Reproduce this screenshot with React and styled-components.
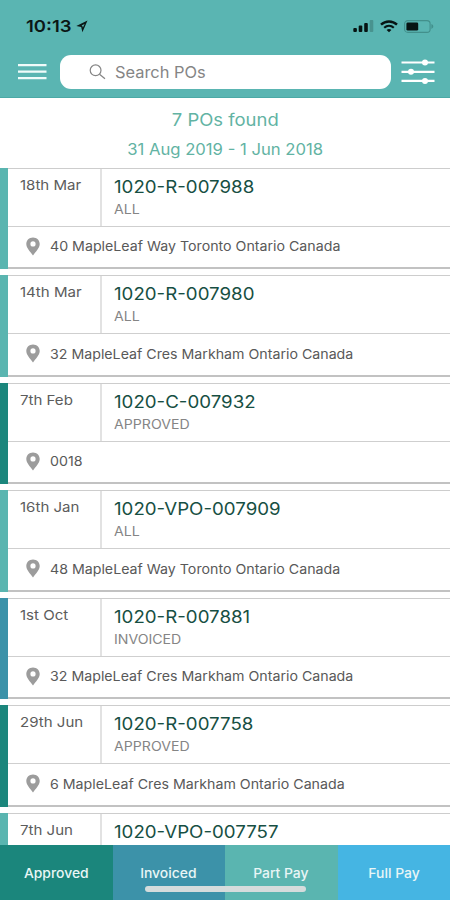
import React from "react";
import styled, { createGlobalStyle } from "styled-components";

const GlobalStyle = createGlobalStyle`
  * {
    box-sizing: border-box;
  }
  body {
    margin: 0;
    background: #fff;
    font-family: Inter, "Liberation Sans", sans-serif;
  }
`;

const statusColors = {
  APPROVED: "#1b867c",
  INVOICED: "#3c92a9",
  ALL: "#5ab5b0",
};

const orders = [
  { date: "18th Mar", number: "1020-R-007988", status: "ALL", address: "40 MapleLeaf Way Toronto Ontario Canada" },
  { date: "14th Mar", number: "1020-R-007980", status: "ALL", address: "32 MapleLeaf Cres Markham Ontario Canada" },
  { date: "7th Feb", number: "1020-C-007932", status: "APPROVED", address: "0018" },
  { date: "16th Jan", number: "1020-VPO-007909", status: "ALL", address: "48 MapleLeaf Way Toronto Ontario Canada" },
  { date: "1st Oct", number: "1020-R-007881", status: "INVOICED", address: "32 MapleLeaf Cres Markham Ontario Canada" },
  { date: "29th Jun", number: "1020-R-007758", status: "APPROVED", address: "6 MapleLeaf Cres Markham Ontario Canada" },
  { date: "7th Jun", number: "1020-VPO-007757", status: "ALL", collapsed: true },
];

const tabs = [
  { label: "Approved", color: "#1b867c" },
  { label: "Invoiced", color: "#3c92a9" },
  { label: "Part Pay", color: "#5ab5b0" },
  { label: "Full Pay", color: "#45b5e3" },
];

const Screen = styled.div`
  position: relative;
  display: flex;
  flex-direction: column;
  width: 450px;
  height: 900px;
  overflow: hidden;
  background: #fff;
`;

// wide lettering
const Wide = styled.span`
  display: inline-block;
  white-space: nowrap;
  transform: scaleX(${(p) => p.$x});
  transform-origin: ${(p) => p.$origin || "left"} center;
`;

const Header = styled.header`
  flex: none;
  height: 98px;
  background: #5ab5b2;
  border-bottom: 1px solid #4ba9a6;
`;

const StatusBar = styled.div`
  display: flex;
  align-items: center;
  justify-content: space-between;
  height: 55px;
  padding: 0 16px 3px 26px;
`;

const Clock = styled.div`
  display: flex;
  align-items: center;
  gap: 9px;
  color: #0b1716;
  font-size: 16.5px;
  font-weight: 600;
`;

const StatusIcons = styled.div`
  display: flex;
  align-items: center;
  gap: 6px;
`;

const SearchRow = styled.div`
  display: flex;
  align-items: center;
  height: 34px;
  padding: 0 15px 0 18px;
`;

const SearchBox = styled.div`
  display: flex;
  align-items: center;
  flex: 1;
  height: 34px;
  margin: 0 10px 0 13px;
  padding-left: 29px;
  gap: 9px;
  border-radius: 11px;
  background: #fff;
  color: #858585;
  font-size: 16px;
`;

const Summary = styled.div`
  flex: none;
  height: 69.5px;
  padding-top: 10px;
  text-align: center;
  color: #62b3a3;
`;

const Count = styled.div`
  font-size: 17px;
  line-height: 24px;
`;

const Range = styled.div`
  margin-top: 6px;
  font-size: 15.5px;
  line-height: 24px;
`;

const List = styled.main`
  flex: 1;
  min-height: 0;
  overflow: hidden;
`;

const Card = styled.article`
  height: 101.5px;
  margin-bottom: 6px;
  border-left: 8px solid ${(p) => statusColors[p.$status]};
`;

const CardBody = styled.div`
  display: flex;
  flex-direction: column;
  height: 100%;
  border-top: 1px solid #cdcdcd;
  border-bottom: 2px solid #c2c2c2;
`;

const CardTop = styled.div`
  display: flex;
  height: 58px;
  border-bottom: 1px solid #cfcfcf;
`;

const DateCell = styled.div`
  width: 94px;
  padding: 6px 0 0 12px;
  border-right: 2px solid #e2e2e2;
  color: #5c5c5c;
  font-size: 13.5px;
  line-height: 20px;
`;

const OrderCell = styled.div`
  padding: 6px 0 0 11.6px;
`;

const OrderNumber = styled.div`
  color: #174f43;
  font-size: 17px;
  line-height: 24px;
`;

const Status = styled.div`
  margin-top: 1px;
  color: #858585;
  font-size: 12.5px;
  line-height: 20px;
`;

const Address = styled.div`
  display: flex;
  align-items: center;
  flex: 1;
  padding: 0 0 1px 17.5px;
  gap: 10.5px;
  color: #595959;
  font-size: 13px;
`;

const TabBar = styled.nav`
  display: grid;
  flex: none;
  grid-template-columns: repeat(4, 1fr);
  height: 55px;
`;

const Tab = styled.div`
  display: flex;
  align-items: center;
  justify-content: center;
  background: ${(p) => p.$color};
  color: #e9f6f6;
  font-size: 13px;
  font-weight: 500;
`;

// sits over the tabs
const HomeIndicator = styled.div`
  position: absolute;
  left: 145px;
  bottom: 8px;
  width: 161px;
  height: 6px;
  border-radius: 3px;
  background: #d5dcdc;
`;

const LocationArrow = () => (
  <svg width="12" height="13" viewBox="0 0 12 13">
    <path d="M11.5 0.5 L0.3 5.9 L5.2 6.9 L6.4 12.3 Z" fill="#0b1716" />
    <path d="M8.6 3.9 L5.6 5.6 L6.5 6.2 L6.9 7.4 Z" fill="#5ab5b2" />
  </svg>
);

const SignalIcon = () => (
  <svg width="21" height="12" viewBox="0 0 21 12">
    <rect x="0.3" y="8" width="3.6" height="4" rx="1" fill="#071413" />
    <rect x="5.7" y="5.5" width="3.6" height="6.5" rx="1" fill="#071413" />
    <rect x="11.2" y="3" width="3.6" height="9" rx="1" fill="#071413" />
    <rect x="16.7" y="0" width="3.6" height="12" rx="1" fill="#48938f" />
  </svg>
);

const WifiIcon = () => (
  <svg width="18" height="13" viewBox="0 0 18 13" fill="none" stroke="#071413">
    <path d="M1 4.7 C5.5 0.4 12.5 0.4 17 4.7" strokeWidth="2.4" />
    <path d="M4.2 7.8 C7 5.2 11 5.2 13.8 7.8" strokeWidth="2.1" />
    <path d="M9 12.3 L6.6 10 C8 8.8 10 8.8 11.4 10 Z" fill="#071413" stroke="none" />
  </svg>
);

const BatteryIcon = () => (
  <svg width="30" height="13" viewBox="0 0 30 13">
    <rect x="0.6" y="0.6" width="25.5" height="11.8" rx="3.2" fill="none" stroke="#42908c" strokeWidth="1.1" />
    <rect x="2.4" y="2.4" width="11.8" height="8.2" rx="1.4" fill="#071413" />
    <path d="M27.4 4.1 C29.9 5 29.9 8 27.4 8.9 Z" fill="#42908c" />
  </svg>
);

const MenuIcon = () => (
  <svg width="29" height="18" viewBox="0 0 29 18" stroke="#f0fbfa" strokeWidth="2.3">
    <path d="M0 2.2 H28.5 M0 8.7 H28.5 M0 15.2 H28.5" />
  </svg>
);

const SearchIcon = () => (
  <svg width="17" height="16" viewBox="0 0 17 16" fill="none" stroke="#858585" strokeWidth="1.2">
    <circle cx="6.6" cy="6.3" r="5.4" />
    <path d="M10.5 10.2 L16 14.8" />
  </svg>
);

const FilterIcon = () => (
  <svg width="34" height="26" viewBox="0 0 34 26" stroke="#fff" strokeWidth="2.2" fill="#fff">
    <path d="M0.5 3.5 H33.5 M0.5 12.8 H33.5 M0.5 21.9 H33.5" />
    <g stroke="none">
      <circle cx="24" cy="3.5" r="3" />
      <circle cx="10" cy="12.8" r="3" />
      <circle cx="24" cy="21.9" r="3" />
    </g>
  </svg>
);

const PinIcon = () => (
  <svg width="14" height="19" viewBox="0 0 14 19">
    <path
      d="M7 0.5 C3.2 0.5 0.3 3.3 0.3 7 C0.3 11 4.2 14.6 7 18.5 C9.8 14.6 13.7 11 13.7 7 C13.7 3.3 10.8 0.5 7 0.5 Z M7 4.3 A2.6 2.6 0 1 1 7 9.5 A2.6 2.6 0 1 1 7 4.3 Z"
      fill="#9c9c9c"
      fillRule="evenodd"
    />
  </svg>
);

const OrderCard = ({ order }) => (
  <Card $status={order.status}>
    <CardBody>
      <CardTop>
        <DateCell>
          <Wide $x={1.115}>{order.date}</Wide>
        </DateCell>
        <OrderCell>
          <OrderNumber>
            <Wide $x={1.1}>{order.number}</Wide>
          </OrderNumber>
          {!order.collapsed && (
            <Status>
              <Wide $x={1.13}>{order.status}</Wide>
            </Status>
          )}
        </OrderCell>
      </CardTop>
      {!order.collapsed && (
        <Address>
          <PinIcon />
          <Wide $x={1.092}>{order.address}</Wide>
        </Address>
      )}
    </CardBody>
  </Card>
);

const App = () => {
  return (
    <>
      <GlobalStyle />
      <Screen>
        <Header>
          <StatusBar>
            <Clock>
              <Wide $x={1.12}>10:13</Wide>
              <LocationArrow />
            </Clock>
            <StatusIcons>
              <SignalIcon />
              <WifiIcon />
              <BatteryIcon />
            </StatusIcons>
          </StatusBar>
          <SearchRow>
            <MenuIcon />
            <SearchBox>
              <SearchIcon />
              <Wide $x={1.025}>Search POs</Wide>
            </SearchBox>
            <FilterIcon />
          </SearchRow>
        </Header>
        <Summary>
          <Count>
            <Wide $x={1.085} $origin="center">7 POs found</Wide>
          </Count>
          <Range>
            <Wide $x={1.075} $origin="center">31 Aug 2019 - 1 Jun 2018</Wide>
          </Range>
        </Summary>
        <List>
          {orders.map((order) => (
            <OrderCard key={order.number} order={order} />
          ))}
        </List>
        <TabBar>
          {tabs.map((tab) => (
            <Tab key={tab.label} $color={tab.color}>
              <Wide $x={1.07} $origin="center">{tab.label}</Wide>
            </Tab>
          ))}
        </TabBar>
        <HomeIndicator />
      </Screen>
    </>
  );
};

export default App;
